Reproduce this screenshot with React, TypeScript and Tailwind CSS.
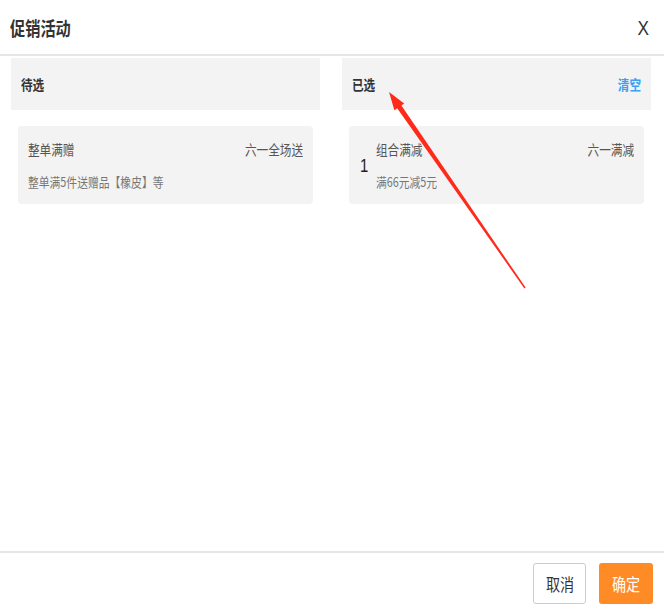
const font = { fontFamily: '"Noto Sans CJK SC", "Noto Sans", sans-serif' };

export default function App() {
  return (
    <div className="relative w-[664px] h-[611px] bg-white flex flex-col overflow-hidden" style={font}>
      {/* header */}
      <div className="h-[56px] shrink-0 flex items-center justify-between pl-[10px] pr-[15px] border-b-2 border-[#e6e6ea]">
        <h3 className="text-[19px] font-bold text-[#333333] leading-none origin-left scale-x-[0.8]">促销活动</h3>
        <span className="text-[21px] text-[#333333] leading-none origin-right scale-x-[0.82]" style={{ fontFamily: '"Liberation Sans", sans-serif' }}>X</span>
      </div>

      {/* body */}
      <div className="flex-1 grid grid-cols-2 gap-[22px] pl-[11px] pr-[13px] pt-[2px] content-start">
        <div className="flex flex-col">
          <div className="h-[52px] bg-[#f3f3f3] flex items-center px-[10px]">
            <span className="text-[14px] font-bold text-[#333333] origin-left scale-x-[0.83]">待选</span>
          </div>
          <div className="mx-[7px] mt-[16px] h-[78px] bg-[#f3f3f3] rounded-[4px] px-[10px] pt-[12px]">
            <div className="flex justify-between text-[14px] leading-[22px] text-[#555555]">
              <span className="origin-left scale-x-[0.83]">整单满赠</span>
              <span className="origin-right scale-x-[0.83]">六一全场送</span>
            </div>
            <div className="mt-[12px] text-[13px] leading-[20px] text-[#777777] origin-left scale-x-[0.83]">整单满5件送赠品【橡皮】等</div>
          </div>
        </div>

        <div className="flex flex-col">
          <div className="h-[52px] bg-[#f3f3f3] flex items-center justify-between px-[10px]">
            <span className="text-[14px] font-bold text-[#333333] origin-left scale-x-[0.83]">已选</span>
            <span className="text-[14px] font-bold text-[#3aa1f2] origin-right scale-x-[0.83]">清空</span>
          </div>
          <div className="mx-[7px] mt-[16px] h-[78px] bg-[#f3f3f3] rounded-[4px] pl-[11px] pr-[10px] flex items-center gap-[6px]">
            <span className="text-[18px] text-[#222222] mt-[2px] origin-left scale-x-[0.83]" style={{ fontFamily: '"Liberation Sans", sans-serif' }}>1</span>
            <div className="flex-1 self-start pt-[12px]">
              <div className="flex justify-between text-[14px] leading-[22px] text-[#555555]">
                <span className="origin-left scale-x-[0.83]">组合满减</span>
                <span className="origin-right scale-x-[0.83]">六一满减</span>
              </div>
              <div className="mt-[12px] text-[13px] leading-[20px] text-[#777777] origin-left scale-x-[0.83]">满66元减5元</div>
            </div>
          </div>
        </div>
      </div>

      {/* footer */}
      <div className="h-[60px] shrink-0 border-t-2 border-[#e6e6ea] flex items-start justify-end gap-[13px] pr-[11px] pt-[10px]">
        <button className="w-[53px] h-[41px] border border-[#cccccc] rounded-[3px] bg-white flex items-center justify-center">
          <span className="text-[17px] text-[#333333] scale-x-[0.83]">取消</span>
        </button>
        <button className="w-[54px] h-[41px] rounded-[3px] bg-[#ff8b26] flex items-center justify-center">
          <span className="text-[17px] text-white scale-x-[0.83]">确定</span>
        </button>
      </div>

      {/* annotation arrow */}
      <svg className="absolute inset-0 pointer-events-none" width="664" height="611" viewBox="0 0 664 611">
        <polygon
          fill="#ff2a1a"
          points="389,92 394.4,110.2 397.2,108.2 524.4,288.4 525.6,287.6 401.4,105.4 404.2,103.4"
        />
      </svg>
    </div>
  );
}
